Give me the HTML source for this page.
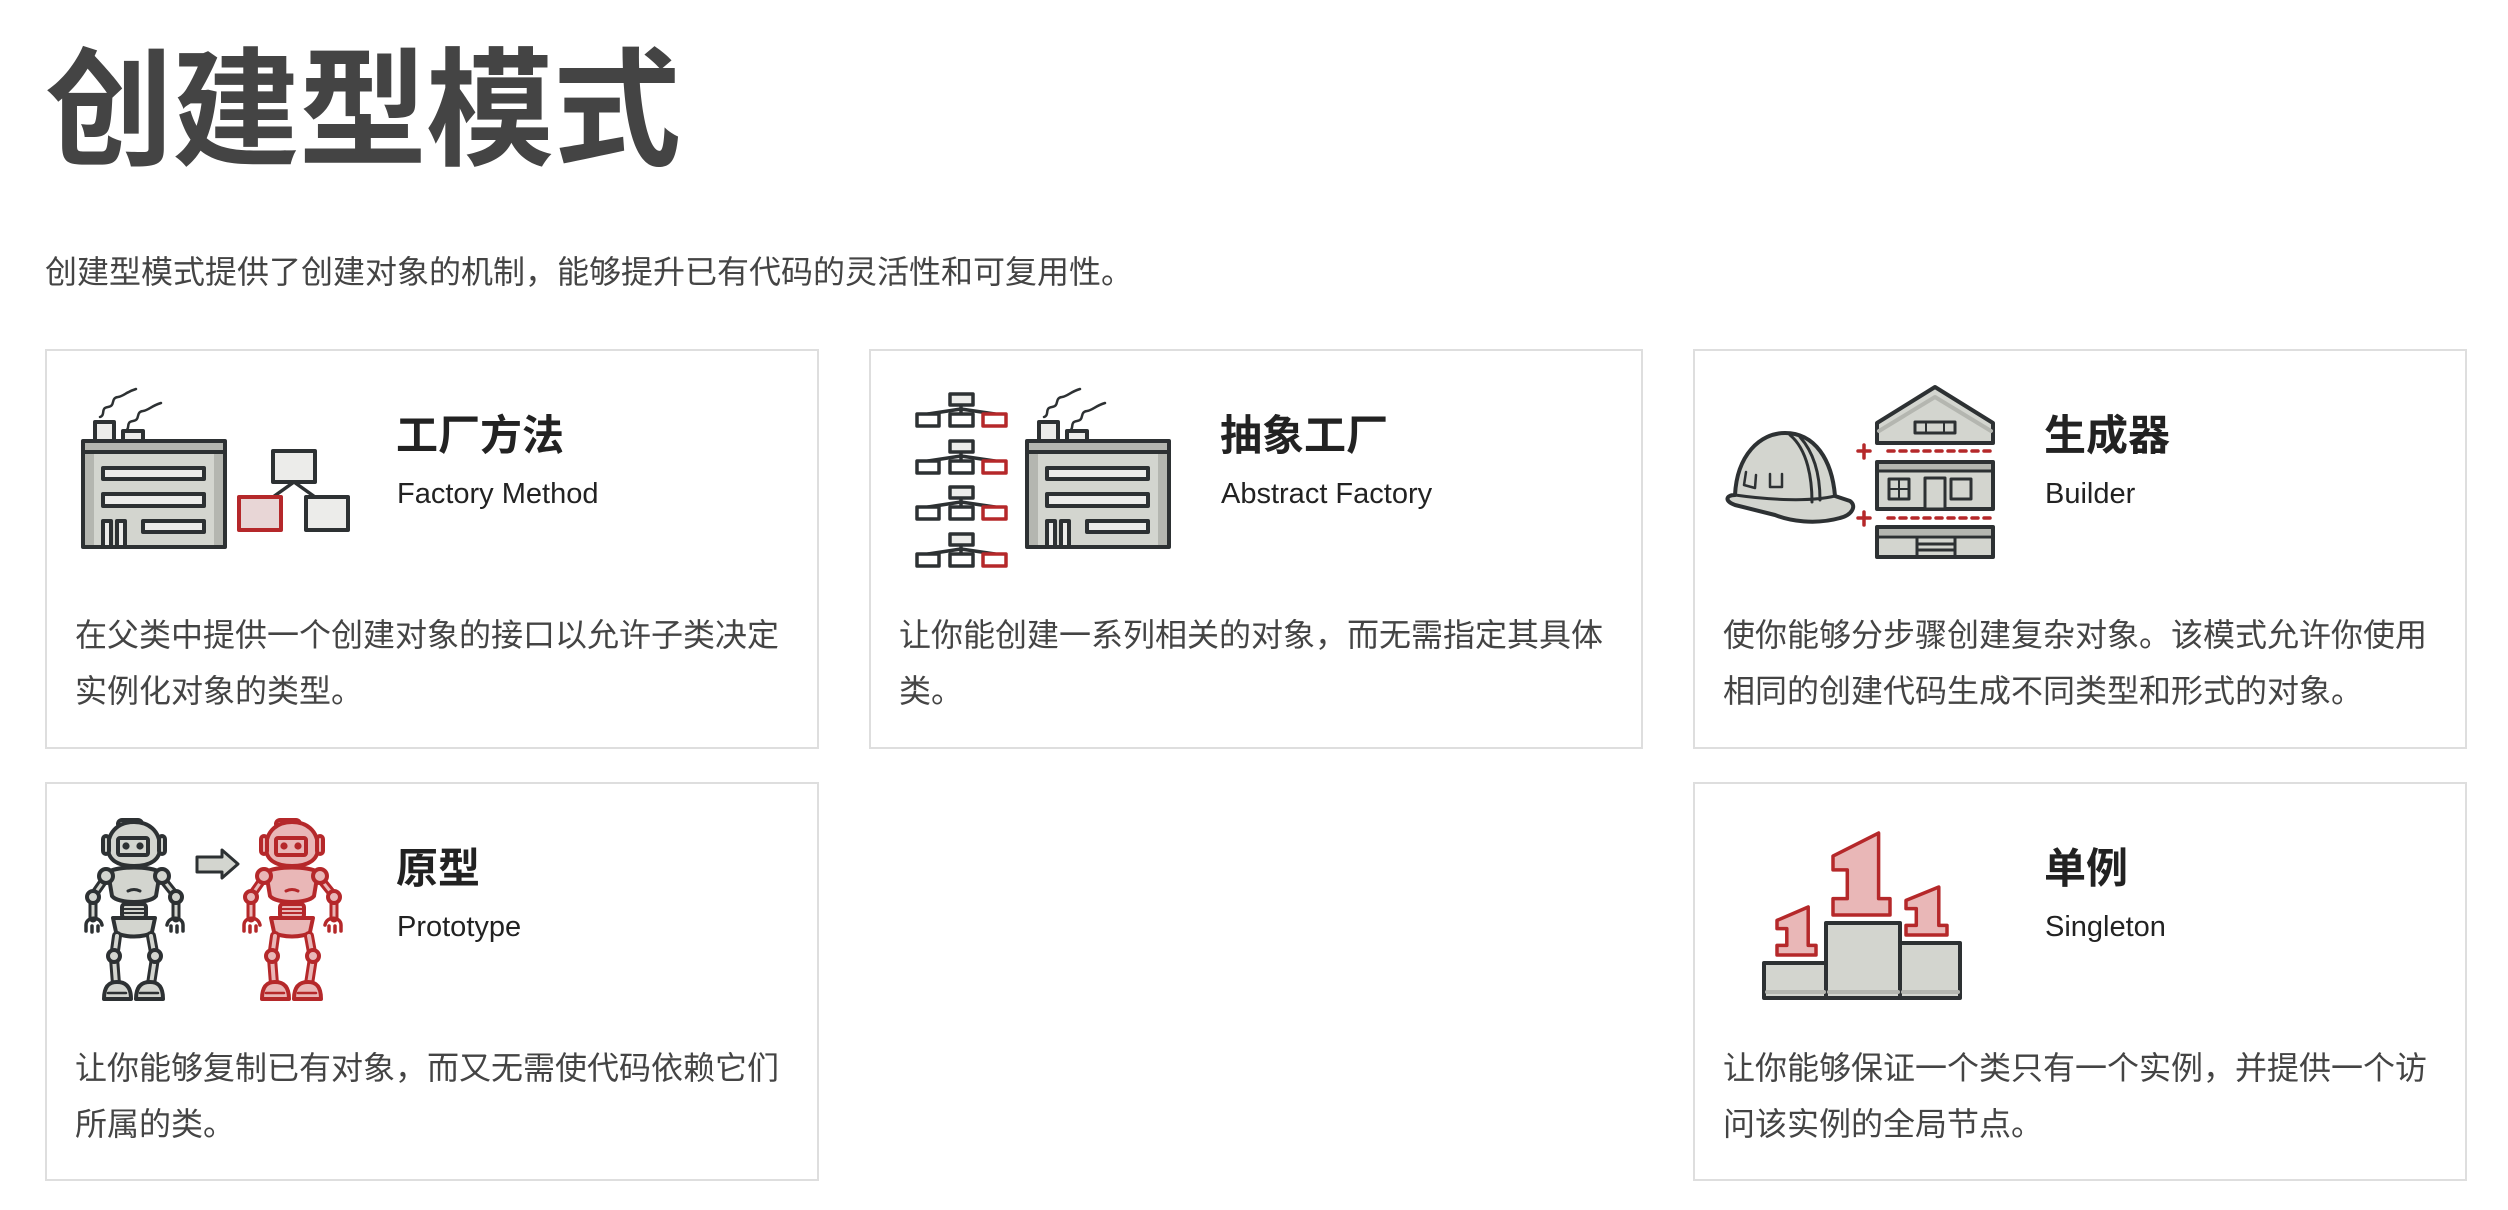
<!DOCTYPE html>
<html><head><meta charset="utf-8"><style>
*{margin:0;padding:0;box-sizing:border-box}
body{width:2508px;height:1210px;background:#fff;position:relative;overflow:hidden;font-family:"Liberation Sans","Noto Sans CJK SC",sans-serif;color:#444}
.h1{position:absolute;left:45px;top:36px;font-size:128px;line-height:128px;font-weight:700;color:#444;font-family:"Noto Sans CJK SC",sans-serif;letter-spacing:-1px}
.desc{position:absolute;left:45px;top:256px;font-size:32px;line-height:32px;color:#444;white-space:nowrap}
.card{position:absolute;width:774px;border:2px solid #dedede;background:#fff}
.t{position:absolute;left:349px;top:61px;font-size:42px;line-height:42px;font-weight:700;color:#222;white-space:nowrap;font-family:"Noto Sans CJK SC",sans-serif}
.s{position:absolute;left:350px;top:128px;font-size:29px;line-height:30px;color:#222;white-space:nowrap}
.b{position:absolute;left:28px;top:256px;font-size:32px;line-height:56px;color:#444;white-space:nowrap}
svg{position:absolute;left:0;top:0}
</style></head><body>
<div class="h1">创建型模式</div>
<div class="desc">创建型模式提供了创建对象的机制，能够提升已有代码的灵活性和可复用性。</div>

<div class="card" style="left:45px;top:349px;height:400px"><div class="t">工厂方法</div><div class="s">Factory Method</div><div class="b">在父类中提供一个创建对象的接口以允许子类决定<br>实例化对象的类型。</div></div>
<div class="card" style="left:869px;top:349px;height:400px"><div class="t">抽象工厂</div><div class="s">Abstract Factory</div><div class="b">让你能创建一系列相关的对象，而无需指定其具体<br>类。</div></div>
<div class="card" style="left:1693px;top:349px;height:400px"><div class="t">生成器</div><div class="s">Builder</div><div class="b">使你能够分步骤创建复杂对象。该模式允许你使用<br>相同的创建代码生成不同类型和形式的对象。</div></div>
<div class="card" style="left:45px;top:782px;height:399px"><div class="t">原型</div><div class="s">Prototype</div><div class="b">让你能够复制已有对象，而又无需使代码依赖它们<br>所属的类。</div></div>
<div class="card" style="left:1693px;top:782px;height:399px"><div class="t">单例</div><div class="s">Singleton</div><div class="b">让你能够保证一个类只有一个实例，并提供一个访<br>问该实例的全局节点。</div></div>

<svg width="2508" height="1210" viewBox="0 0 2508 1210" fill="none" stroke="#2d3133" stroke-width="4" stroke-linejoin="round" stroke-linecap="round">
<defs>
<g id="fac">
  <path d="M100,417 c6,-2 0,-9 8,-10 c8,-1 2,-9 10,-10 c6,-1 8,-5 18,-8" stroke-width="2.5"/>
  <path d="M125,431 c6,-2 0,-9 8,-10 c8,-1 2,-9 10,-10 c6,-1 8,-5 18,-8" stroke-width="2.5"/>
  <rect x="95" y="422" width="19" height="20" fill="#ececea"/>
  <rect x="123" y="431" width="20" height="11" fill="#ececea"/>
  <rect x="83" y="441" width="142" height="106" fill="#d3d5cf"/>
  <rect x="85" y="443" width="138" height="9" fill="#b4b6b0" stroke="none"/>
  <rect x="85" y="452" width="9" height="93" fill="#b4b6b0" stroke="none"/>
  <rect x="214" y="452" width="9" height="93" fill="#b4b6b0" stroke="none"/>
  <line x1="83" y1="452" x2="225" y2="452"/>
  <rect x="103" y="468" width="101" height="11" fill="#ececea"/>
  <rect x="103" y="494" width="101" height="12" fill="#ececea"/>
  <rect x="103" y="521" width="8" height="26" fill="#ececea"/>
  <rect x="117" y="521" width="8" height="26" fill="#ececea"/>
  <rect x="143" y="521" width="61" height="11" fill="#ececea"/>
</g>
<g id="tree" stroke-width="3.5">
  <path d="M961,405 V414 M961,409 L928,414 M961,409 L995,414"/>
  <rect x="950" y="394" width="23" height="11" fill="#ececea"/>
  <rect x="917" y="414" width="22" height="12" fill="#fff"/>
  <rect x="950" y="414" width="23" height="12" fill="#fff"/>
  <rect x="983" y="414" width="23" height="12" fill="#fff" stroke="#b5282a"/>
</g>
<g id="robot">
  <rect x="118" y="820" width="24" height="8" rx="4" fill="var(--f)"/>
  <path d="M108,848 C108,830 120,822 134,822 C148,822 160,830 160,848 C160,860 150,866 134,866 C118,866 108,860 108,848 Z" fill="var(--f)"/>
  <rect x="103" y="836" width="6" height="18" rx="3" fill="var(--f)"/>
  <rect x="159" y="836" width="6" height="18" rx="3" fill="var(--f)"/>
  <rect x="118" y="838" width="30" height="17" rx="2" fill="var(--f)"/>
  <circle cx="126" cy="846" r="1.6" fill="var(--s)"/><circle cx="140" cy="846" r="1.6" fill="var(--s)"/>
  <path d="M108,872 C118,866 150,866 160,872 L156,896 C150,904 118,904 112,896 Z" fill="var(--f)"/>
  <path d="M128,891 q6,-3 12,0" stroke-width="3"/>
  <path d="M107,876 L93,896 L93,918 M160,876 L176,896 L176,918" stroke-width="9"/>
  <path d="M107,876 L93,896 L93,918 M160,876 L176,896 L176,918" stroke="var(--f)" stroke-width="3"/>
  <circle cx="106" cy="876" r="7" fill="var(--f)"/><circle cx="162" cy="876" r="7" fill="var(--f)"/>
  <circle cx="93" cy="897" r="6" fill="var(--f)"/><circle cx="176" cy="897" r="6" fill="var(--f)"/>
  <path d="M86,925 c0,-8 14,-10 16,0 M86,925 v6 M92,926 v6 M98,926 v5 M167,925 c2,-10 16,-8 16,0 M183,925 v6 M177,926 v6 M171,926 v5" stroke-width="3.5"/>
  <rect x="122" y="904" width="24" height="14" rx="3" fill="var(--f)"/>
  <path d="M124,909 h20 M124,913 h20" stroke-width="2"/>
  <path d="M113,918 h42 l-3,14 c-6,6 -30,6 -36,0 Z" fill="var(--f)"/>
  <path d="M117,936 L114,958 L116,984 M151,936 L155,958 L151,984" stroke-width="10"/>
  <path d="M117,936 L114,958 L116,984 M151,936 L155,958 L151,984" stroke="var(--f)" stroke-width="4"/>
  <circle cx="114" cy="956" r="6" fill="var(--f)"/><circle cx="155" cy="956" r="6" fill="var(--f)"/>
  <path d="M104,999 c0,-14 6,-17 13,-17 c7,0 14,3 14,17 Z" fill="var(--f)"/>
  <path d="M136,999 c0,-14 7,-17 14,-17 c7,0 13,3 13,17 Z" fill="var(--f)"/>
  <path d="M108,993 h18 M140,993 h18" stroke-width="2.5"/>
</g>
</defs>

<!-- Factory method -->
<use href="#fac"/>
<path d="M294,482 L273,497 M294,482 L315,497" stroke-width="3.5"/>
<rect x="273" y="451" width="42" height="31" fill="#ececea"/>
<rect x="239" y="497" width="42" height="33" fill="#e8d6d6" stroke="#b5282a"/>
<rect x="306" y="497" width="42" height="33" fill="#ececea"/>

<!-- Abstract factory -->
<use href="#fac" transform="translate(944,0)"/>
<use href="#tree"/>
<use href="#tree" transform="translate(0,47)"/>
<use href="#tree" transform="translate(0,93)"/>
<use href="#tree" transform="translate(0,140)"/>

<!-- Builder -->
<path d="M1735,495 C1737,455 1760,433 1785,433 C1815,433 1832,460 1835,496 L1850,501 C1857,506 1852,515 1840,518 C1815,525 1790,521 1775,515 L1735,505 C1724,501 1726,495 1735,495 Z" fill="#d3d5cf"/>
<path d="M1735,495 C1770,500 1810,502 1835,496 M1790,435 C1808,450 1812,480 1812,502 M1800,437 C1816,455 1820,480 1820,500" stroke-width="3"/>
<path d="M1746,472 l-2,13 l11,3 l1,-13 M1770,474 v13 h12 v-13" stroke-width="2.5"/>
<path d="M1877,423 L1935,387 L1993,423 L1993,443 L1877,443 Z" fill="#d3d5cf"/>
<path d="M1879,431 L1935,397 L1991,431" stroke="#b4b6b0" stroke-width="4"/>
<rect x="1915" y="422" width="40" height="11" fill="#d3d5cf" stroke-width="3"/>
<path d="M1926,422 v11 M1944,422 v11" stroke-width="2"/>
<path d="M1858,451 h12 M1864,445 v13 M1858,518 h12 M1864,512 v13" stroke="#b5282a" stroke-width="3.5"/>
<path d="M1888,451 H1990 M1888,518 H1990" stroke="#b5282a" stroke-width="3.5" stroke-dasharray="6 6"/>
<rect x="1877" y="462" width="116" height="47" fill="#d3d5cf"/>
<rect x="1879" y="464" width="112" height="7" fill="#b4b6b0" stroke="none"/>
<line x1="1877" y1="471" x2="1993" y2="471" stroke-width="3"/>
<rect x="1889" y="479" width="20" height="20" fill="#d3d5cf" stroke-width="3"/>
<path d="M1899,479 v20 M1889,489 h20 M1961,479 v20 M1951,489 h20" stroke-width="2"/>
<rect x="1951" y="479" width="20" height="20" fill="#d3d5cf" stroke-width="3"/>
<rect x="1925" y="478" width="20" height="31" fill="#d3d5cf" stroke-width="3"/>
<rect x="1877" y="527" width="116" height="30" fill="#d3d5cf"/>
<rect x="1879" y="529" width="112" height="6" fill="#b4b6b0" stroke="none"/>
<path d="M1877,537 H1993 M1917,537 V557 M1955,537 V557 M1917,544 H1955 M1917,550 H1955" stroke-width="3"/>

<!-- Prototype -->
<g style="--f:#d3d5cf;--s:#2d3133"><use href="#robot"/></g>
<g style="--f:#e9b7b7;--s:#b5282a" stroke="#b5282a"><use href="#robot" transform="translate(158,0)"/></g>
<path d="M197,857 H222 V850 L238,864 L222,878 V872 H197 Z" fill="#d3d5cf" stroke-width="3"/>

<!-- Singleton -->
<path d="M1878.6,833 L1878.6,898.6 L1890,898.6 L1890,915 L1833,915 L1833,898.6 L1847.3,898.6 L1847.3,869.9 L1833,869.9 L1833,856 Z" fill="#e9b7b7" stroke="#b5282a" stroke-width="3.5"/>
<path d="M1808.2,907 L1808.2,945.4 L1816,945.4 L1816,955 L1777,955 L1777,945.4 L1786.8,945.4 L1786.8,928.6 L1777,928.6 L1777,920.4 Z" fill="#e9b7b7" stroke="#b5282a" stroke-width="3.5"/>
<path d="M1938.8,887 L1938.8,925.4 L1947,925.4 L1947,935 L1906,935 L1906,925.4 L1916.3,925.4 L1916.3,908.6 L1906,908.6 L1906,900.4 Z" fill="#e9b7b7" stroke="#b5282a" stroke-width="3.5"/>
<rect x="1764" y="963" width="62" height="35" fill="#d3d5cf"/>
<rect x="1826" y="923" width="74" height="75" fill="#d3d5cf"/>
<rect x="1900" y="943" width="60" height="55" fill="#d3d5cf"/>
<path d="M1767,992 h57 M1829,992 h69 M1903,992 h55" stroke="#b4b6b0" stroke-width="4"/>
</svg>
</body></html>
